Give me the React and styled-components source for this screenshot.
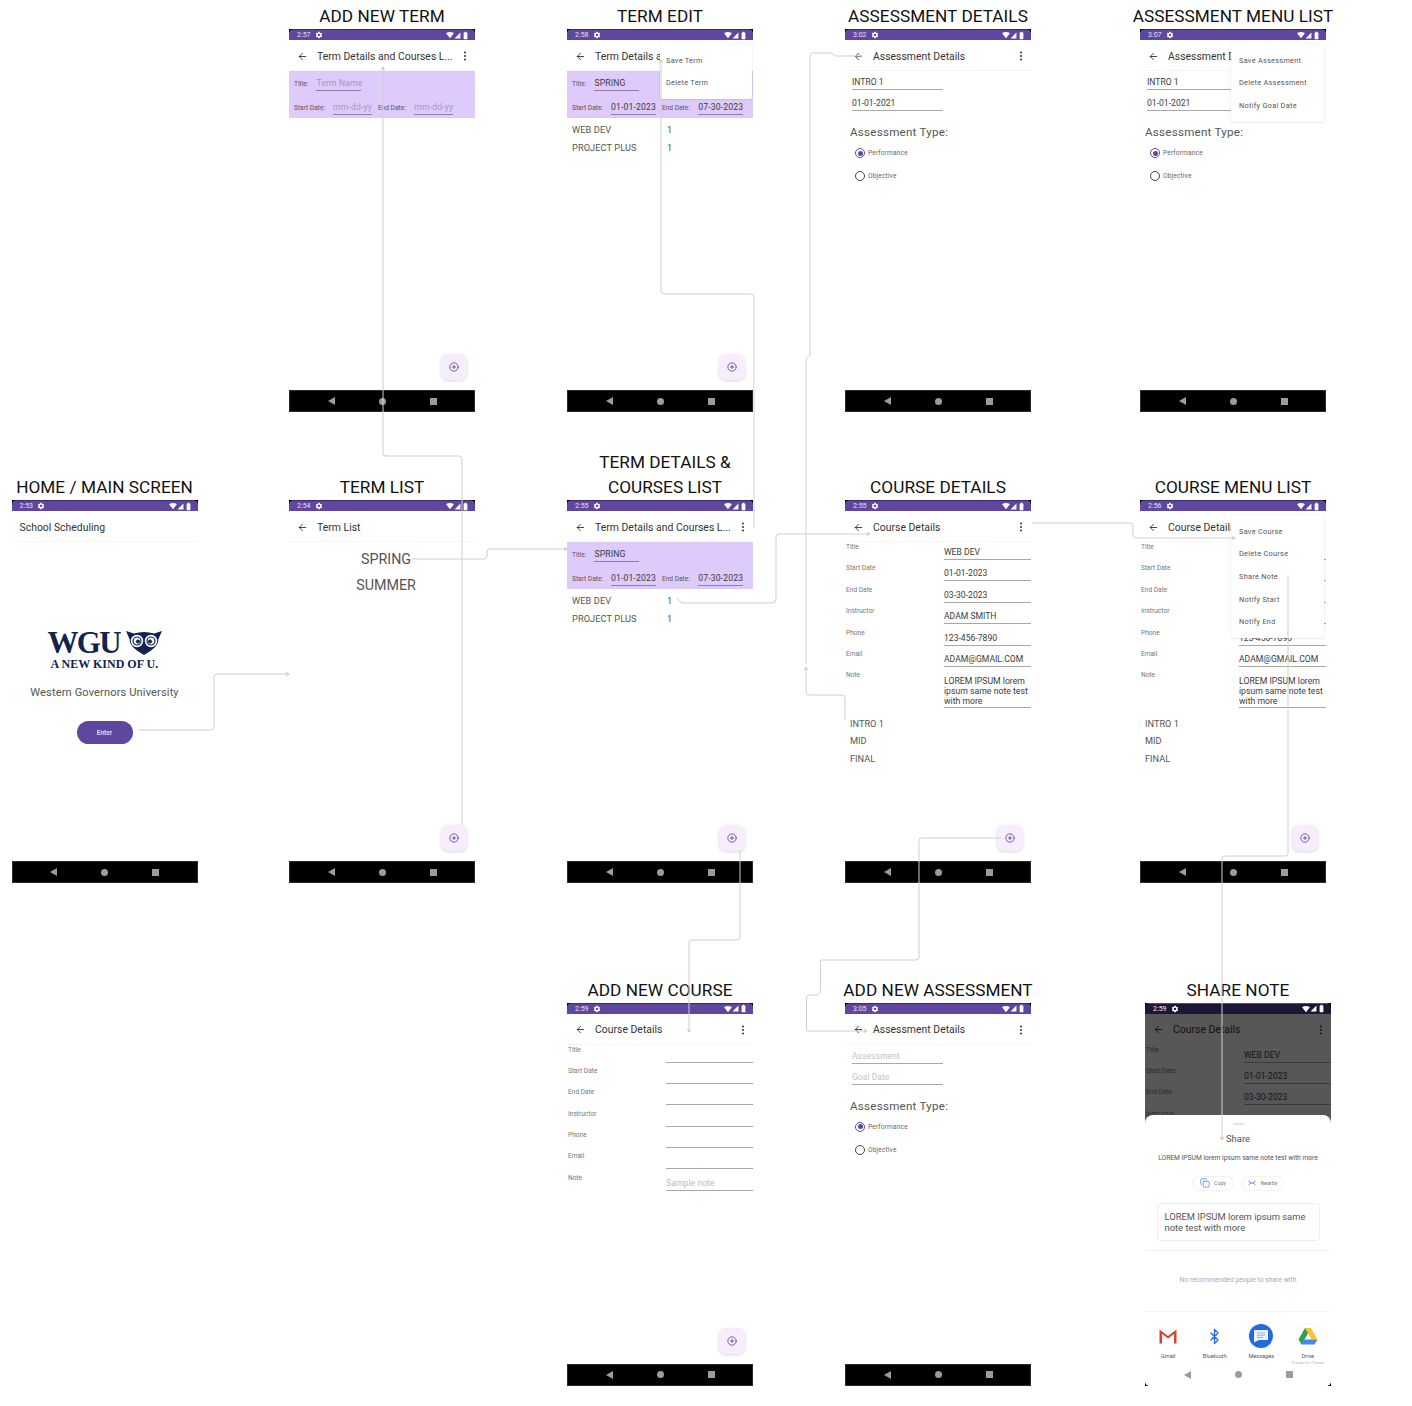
import React from "react";
import styled, { createGlobalStyle } from "styled-components";
import { ArrowLeft, CirclePlus, Copy, Bluetooth } from "lucide-react";
import { MdSettings, MdSignalWifi4Bar, MdSignalCellular4Bar, MdBatteryFull } from "react-icons/md";

const Global = createGlobalStyle`
  html, body { margin: 0; padding: 0; background: #fff; }
  body { font-family: Roboto, "Liberation Sans", sans-serif; }
  * { box-sizing: border-box; }
`;

const Canvas = styled.div`
  position: relative;
  width: 1412px;
  height: 1406px;
  overflow: hidden;
  background: #fff;
`;

const Frame = styled.section`
  position: absolute;
  left: ${(p) => p.$x}px;
  top: ${(p) => p.$y - 25 * (p.$lines || 1)}px;
  width: 186px;
  display: flex;
  flex-direction: column;
`;

const Title = styled.h2`
  margin: 0;
  display: flex;
  justify-content: center;
  font: 400 17.2px/25px Roboto, "Liberation Sans", sans-serif;
  letter-spacing: 0.05px;
  color: #111;
  white-space: nowrap;
  transform: translateX(${(p) => p.$shift || 0}px);
`;

const Phone = styled.div`
  position: relative;
  width: 186px;
  height: 383px;
  background: #fff;
  display: flex;
  flex-direction: column;
  overflow: hidden;
`;

const Status = styled.div`
  position: relative;
  height: 11px;
  flex: none;
  display: flex;
  align-items: center;
  padding: 0 5px 0 8px;
  background: ${(p) => (p.$dim ? "#1d1636" : "#5f47a0")};
  border-top: 1px solid ${(p) => (p.$dim ? "#555" : "#3b2a70")};
  color: ${(p) => (p.$dim ? "#f2f2f2" : "#e6e0f5")};
  font-size: 7px;
  gap: 4px;
  z-index: ${(p) => (p.$dim ? 2 : "auto")};
  &::before, &::after {
    content: "";
    position: absolute;
    top: -1px;
    width: 4px;
    height: 4px;
  }
  &::before { left: 0; background: radial-gradient(circle at 100% 100%, transparent 3.5px, #000 4px); }
  &::after { right: 0; background: radial-gradient(circle at 0 100%, transparent 3.5px, #000 4px); }
`;

const StatusRight = styled.span`
  margin-left: auto;
  display: flex;
  align-items: center;
  gap: 0;
  color: #fff;
`;

const Bar = styled.header`
  height: 31px;
  flex: none;
  display: flex;
  align-items: center;
  padding: 2px 6px 0 8px;
  border-bottom: 1px solid #f6f6f6;
  color: #333;
  font-size: 10.4px;
  letter-spacing: 0.02px;
  white-space: nowrap;
`;

const BarTitle = styled.span`
  margin-left: ${(p) => (p.$home ? 0 : 9)}px;
  flex: 1;
`;

const Dots = styled.svg`
  width: 8px;
  height: 10px;
`;

const Body = styled.main`
  flex: 1;
  min-height: 0;
  display: flex;
  flex-direction: column;
  overflow: hidden;
`;

const ShareBody = styled(Body)`
  flex: none;
  height: 71px;
`;

const Nav = styled.footer`
  height: 22px;
  width: 100%;
  flex: none;
  display: grid;
  grid-template-columns: repeat(3, 51px);
  justify-content: center;
  justify-items: center;
  align-items: center;
  background: ${(p) => (p.$light ? "#fff" : "#000")};
  border: 1px solid ${(p) => (p.$light ? "#fff" : "#2b2b2b")};
  position: relative;
`;

const NavTriangle = styled.i`
  width: 0;
  height: 0;
  border-style: solid;
  border-width: 4px 7px 4px 0;
  border-color: transparent #9c9c9c transparent transparent;
`;

const NavCircle = styled.i`
  width: 7px;
  height: 7px;
  border-radius: 50%;
  background: #9c9c9c;
`;

const NavSquare = styled.i`
  width: 7px;
  height: 7px;
  background: #9c9c9c;
`;

const Corner = styled.i`
  position: absolute;
  bottom: -1px;
  ${(p) => (p.$right ? "right: -1px;" : "left: -1px;")}
  width: 4px;
  height: 4px;
  background: radial-gradient(circle at ${(p) => (p.$right ? "0 0" : "100% 0")}, transparent 3.5px, #000 4px);
`;

const Fab = styled.div`
  position: absolute;
  left: 152px;
  top: 325px;
  width: 26px;
  height: 26px;
  border-radius: 7px;
  background: #f8edfd;
  box-shadow: 0 1px 3px rgba(0, 0, 0, 0.16);
  display: flex;
  align-items: center;
  justify-content: center;
  color: #4f3a96;
`;

const Menu = styled.ul`
  position: absolute;
  list-style: none;
  margin: 0;
  left: ${(p) => p.$left}px;
  top: 15px;
  width: ${(p) => p.$width}px;
  padding: 5.5px 0 4px;
  background: #fff;
  border-radius: 2px;
  box-shadow: 0 0 2px rgba(0, 0, 0, 0.12), 0 1px 2px rgba(0, 0, 0, 0.06);
  z-index: 3;
`;

const MenuItem = styled.li`
  height: 22.7px;
  line-height: 22.7px;
  padding-left: ${(p) => p.$pad}px;
  font-size: 7.3px;
  letter-spacing: 0.3px;
  color: #555;
`;

/* term panel */
const Panel = styled.div`
  height: 47px;
  flex: none;
  padding: 5px 0 0 5px;
  background: #dfcbfb;
  display: flex;
  flex-direction: column;
  gap: 9px;
`;

const PanelRow = styled.div`
  height: 15px;
  display: flex;
  align-items: center;
  white-space: nowrap;
`;

const PanelLabel = styled.span`
  font-size: 6.6px;
  color: #555;
  margin-right: ${(p) => p.$gap}px;
`;

const PanelField = styled.span`
  height: 15px;
  width: ${(p) => (p.$width ? p.$width + "px" : "auto")};
  display: flex;
  align-items: center;
  border-bottom: 1px solid #8d7fa8;
  font-size: 8.6px;
  letter-spacing: 0.15px;
  color: ${(p) => (p.$hint ? "#a595c0" : "#3a3a3a")};
  margin-right: ${(p) => p.$gap || 0}px;
`;

const CourseRows = styled.div`
  margin-top: 2px;
  display: flex;
  flex-direction: column;
`;

const CourseRow = styled.div`
  height: 18px;
  padding-left: 5px;
  display: grid;
  grid-template-columns: 95px 1fr;
  align-items: center;
  font-size: 9.2px;
  letter-spacing: 0.1px;
  color: #555;
`;

/* course form */
const Form = styled.div`
  display: grid;
  grid-template-columns: 99px 87px;
  row-gap: 3.4px;
  grid-auto-rows: 18px;
`;

const FormLabel = styled.span`
  padding-left: 1px;
  font-size: 6.6px;
  line-height: 10px;
  color: #777;
`;

const FormField = styled.span`
  display: flex;
  align-items: flex-end;
  padding-bottom: 2px;
  border-bottom: 1px solid #a8a8a8;
  font-size: 8.6px;
  line-height: 10px;
  color: ${(p) => (p.$hint ? "#bbb" : "#3c3c3c")};
  white-space: nowrap;
`;

const NoteField = styled.span`
  grid-row: span 2;
  padding-top: 5.6px;
  height: ${(p) => (p.$short ? "18px" : "37.6px")};
  border-bottom: 1px solid #a8a8a8;
  font-size: 8.7px;
  line-height: 10px;
  color: ${(p) => (p.$hint ? "#bbb" : "#3c3c3c")};
`;

const Assessments = styled.ul`
  list-style: none;
  margin: 5px 0 0;
  padding: 0 0 0 5px;
  font-size: 9.2px;
  line-height: 17.5px;
  color: #555;
`;

/* assessment */
const AssessForm = styled.div`
  padding: 1px 0 0 7px;
  display: flex;
  flex-direction: column;
  gap: 3.4px;
`;

const AssessField = styled.span`
  width: 91px;
  height: 18px;
  display: flex;
  align-items: flex-end;
  padding-bottom: 2px;
  border-bottom: 1px solid #a8a8a8;
  font-size: 8.6px;
  line-height: 10px;
  color: ${(p) => (p.$hint ? "#c4c4c4" : "#3c3c3c")};
`;

const TypeHeading = styled.div`
  margin: 14px 0 0 5px;
  font-size: 11.6px;
  line-height: 14px;
  letter-spacing: 0.25px;
  color: #555;
`;

const RadioList = styled.div`
  margin: 9px 0 0 10px;
  display: flex;
  flex-direction: column;
  gap: 13px;
`;

const RadioRow = styled.label`
  height: 10px;
  display: flex;
  align-items: center;
  gap: 3px;
  font-size: 6.6px;
  letter-spacing: 0.15px;
  color: #666;
`;

const Radio = styled.i`
  width: 10px;
  height: 10px;
  border-radius: 50%;
  border: 1px solid ${(p) => (p.$on ? "#5f47a0" : "#444")};
  display: flex;
  align-items: center;
  justify-content: center;
  &::after {
    content: "";
    width: 5px;
    height: 5px;
    border-radius: 50%;
    background: ${(p) => (p.$on ? "#5f47a0" : "transparent")};
  }
`;

/* home */
const HomeBody = styled(Body)`
  align-items: center;
  padding-top: 87px;
`;

const LogoBlock = styled.div`
  width: 114px;
  display: flex;
  flex-direction: column;
`;

const LogoTop = styled.div`
  height: 27px;
  display: flex;
  align-items: center;
  justify-content: space-between;
`;

const LogoMark = styled.span`
  font: 700 31px/27px "Liberation Serif", serif;
  letter-spacing: -1.7px;
  color: #13234f;
`;

const LogoTag = styled.span`
  margin: 2px 0 0 3px;
  font: 700 12px/13px "Liberation Serif", serif;
  letter-spacing: 0;
  color: #13234f;
  white-space: nowrap;
`;

const Subtitle = styled.p`
  margin: 15px 0 0;
  font-size: 11.1px;
  line-height: 14px;
  letter-spacing: 0.12px;
  color: #555;
`;

const EnterButton = styled.button`
  margin-top: 21px;
  width: 56px;
  height: 23px;
  border: 0;
  border-radius: 12px;
  background: #5f47a0;
  color: #ddd6ee;
  font: 700 6.5px Roboto, sans-serif;
`;

/* term list */
const TermNames = styled.ul`
  list-style: none;
  margin: 4px 0 0;
  padding: 0 0 0 8px;
  text-align: center;
  font-size: 14.3px;
  line-height: 26px;
  color: #555;
`;

/* share */
const Dim = styled.div`
  position: absolute;
  inset: 0;
  background: rgba(0, 0, 0, 0.66);
  z-index: 1;
`;

const Sheet = styled.div`
  position: absolute;
  left: 0;
  right: 0;
  top: 112.5px;
  bottom: 0;
  background: #fff;
  border-radius: 8px 8px 0 0;
  z-index: 2;
  display: flex;
  flex-direction: column;
  align-items: center;
`;

const Handle = styled.i`
  margin-top: 8px;
  width: 11px;
  height: 1.5px;
  background: #e4e4e4;
  flex: none;
`;

const SheetTitle = styled.div`
  margin-top: 7.5px;
  font-size: 9.4px;
  line-height: 14px;
  color: #555;
`;

const SheetText = styled.div`
  margin-top: 7px;
  font-size: 6.7px;
  line-height: 10px;
  color: #555;
  white-space: nowrap;
`;

const Chips = styled.div`
  margin-top: 12.5px;
  display: flex;
  gap: 8px;
`;

const Chip = styled.span`
  width: 42px;
  height: 15px;
  display: flex;
  align-items: center;
  justify-content: center;
  gap: 4px;
  border: 1px solid #f2f2f2;
  border-radius: 8px;
  font-size: 5.4px;
  color: #777;
`;

const NoteBox = styled.div`
  margin-top: 12.5px;
  width: 163px;
  height: 38px;
  padding: 7px 7px;
  border: 1px solid #eee;
  border-radius: 4px;
  font-size: 9.4px;
  line-height: 11px;
  color: #555;
`;

const Divider = styled.hr`
  width: 100%;
  margin: ${(p) => p.$top}px 0 0;
  border: 0;
  border-top: 1px solid #f3f3f3;
`;

const NoPeople = styled.div`
  margin-top: 24px;
  font-size: 6.8px;
  line-height: 10px;
  color: #aaa;
`;

const Apps = styled.div`
  flex: 1;
  min-height: 0;
  width: 100%;
  padding-top: 12px;
  display: grid;
  grid-template-columns: repeat(4, 46.5px);
  overflow: hidden;
`;

const AppCell = styled.div`
  display: flex;
  flex-direction: column;
  align-items: center;
  font-size: 5.6px;
  line-height: 7px;
  color: #555;
  text-align: center;
  white-space: nowrap;
`;

const AppIcon = styled.span`
  width: 24px;
  height: 24px;
  margin-bottom: 5px;
  border-radius: 50%;
  display: flex;
  align-items: center;
  justify-content: center;
  background: ${(p) => p.$bg || "#fff"};
  box-shadow: 0 0 2px rgba(0, 0, 0, 0.1);
`;

const AppHint = styled.span`
  color: #bbb;
`;

const Links = styled.svg`
  position: absolute;
  inset: 0;
  width: 1412px;
  height: 1406px;
  pointer-events: none;
  z-index: 10;
`;

const StatusBar = ({ time, dim }) => (
  <Status $dim={dim}>
    <span>{time}</span>
    <MdSettings size={8} color="#fff" />
    <StatusRight>
      <MdSignalWifi4Bar size={8} />
      <MdSignalCellular4Bar size={7} />
      <MdBatteryFull size={9} />
    </StatusRight>
  </Status>
);

const AppBar = ({ title, home, plain }) => (
  <Bar>
    {!home && <ArrowLeft size={11} strokeWidth={1.8} color="#222" />}
    <BarTitle $home={home}>{title}</BarTitle>
    {!home && !plain && (
      <Dots viewBox="0 0 8 10" fill="#333">
        <circle cx="4" cy="1.5" r="1" />
        <circle cx="4" cy="5" r="1" />
        <circle cx="4" cy="8.5" r="1" />
      </Dots>
    )}
  </Bar>
);

const NavBar = ({ light }) => (
  <Nav $light={light}>
    <NavTriangle />
    <NavCircle />
    <NavSquare />
    {light && <Corner />}
    {light && <Corner $right />}
  </Nav>
);

const FabBtn = () => (
  <Fab>
    <CirclePlus size={10} strokeWidth={1.9} />
  </Fab>
);

const Screen = ({ x, y, title, lines, shift, time, bar, plain, fab, children, over }) => (
  <Frame $x={x} $y={y} $lines={lines}>
    {(Array.isArray(title) ? title : [title]).map((t) => (
      <Title key={t} $shift={shift}>{t}</Title>
    ))}
    <Phone>
      <StatusBar time={time} />
      <AppBar title={bar} plain={plain} />
      <Body>{children}</Body>
      <NavBar />
      {fab && <FabBtn />}
      {over}
    </Phone>
  </Frame>
);

const TermPanel = ({ title, start, end, hint }) => (
  <Panel>
    <PanelRow>
      <PanelLabel $gap={8}>Title:</PanelLabel>
      <PanelField $width={45} $hint={hint}>{title}</PanelField>
    </PanelRow>
    <PanelRow>
      <PanelLabel $gap={8}>Start Date:</PanelLabel>
      <PanelField $hint={hint} $gap={6}>{start}</PanelField>
      <PanelLabel $gap={8.5}>End Date:</PanelLabel>
      <PanelField $hint={hint}>{end}</PanelField>
    </PanelRow>
  </Panel>
);

const Courses = () => (
  <CourseRows>
    <CourseRow><span>WEB DEV</span><span>1</span></CourseRow>
    <CourseRow><span>PROJECT PLUS</span><span>1</span></CourseRow>
  </CourseRows>
);

const courseLabels = ["Title", "Start Date", "End Date", "Instructor", "Phone", "Email"];
const courseValues = ["WEB DEV", "01-01-2023", "03-30-2023", "ADAM SMITH", "123-456-7890", "ADAM@GMAIL.COM"];
const noteText = "LOREM IPSUM lorem ipsum same note test with more";

const CourseForm = ({ empty, rows = 6, note = true }) => (
  <Form>
    {courseLabels.slice(0, rows).map((l, i) => (
      <React.Fragment key={l}>
        <FormLabel>{l}</FormLabel>
        <FormField>{empty ? "" : courseValues[i]}</FormField>
      </React.Fragment>
    ))}
    {note && <FormLabel>Note</FormLabel>}
    {note && <NoteField $hint={empty} $short={empty}>{empty ? "Sample note" : noteText}</NoteField>}
  </Form>
);

const AssessList = () => (
  <Assessments>
    <li>INTRO 1</li>
    <li>MID</li>
    <li>FINAL</li>
  </Assessments>
);

const AssessBody = ({ name, date, hint }) => (
  <>
    <AssessForm>
      <AssessField $hint={hint}>{name}</AssessField>
      <AssessField $hint={hint}>{date}</AssessField>
    </AssessForm>
    <TypeHeading>Assessment Type:</TypeHeading>
    <RadioList>
      <RadioRow><Radio $on />Performance</RadioRow>
      <RadioRow><Radio />Objective</RadioRow>
    </RadioList>
  </>
);

const OwlLogo = () => (
  <svg width="36" height="25" viewBox="0 0 36 25">
    <path d="M0 1 L8 3.5 Q18 0.5 28 3.5 L36 1 L32.5 9 Q33 17 18 25 Q3 17 3.5 9 Z" fill="#13234f" />
    <circle cx="11" cy="11" r="6.2" fill="#fff" />
    <circle cx="25" cy="11" r="6.2" fill="#fff" />
    <circle cx="11" cy="11" r="4.6" fill="#13234f" />
    <circle cx="25" cy="11" r="4.6" fill="#13234f" />
    <circle cx="11" cy="11" r="3.4" fill="#fff" />
    <circle cx="25" cy="11" r="3.4" fill="#fff" />
    <circle cx="12" cy="11.5" r="2" fill="#13234f" />
    <circle cx="24" cy="11.5" r="2" fill="#13234f" />
  </svg>
);

const GmailIcon = () => (
  <svg width="18" height="15" viewBox="0 0 18 15">
    <path d="M0.5 0.5 L9 7 L17.5 0.5 V14.5 H15 V5 L9 9.6 L3 5 V14.5 H0.5 Z" fill="#d4432f" />
  </svg>
);

const MessagesIcon = () => (
  <svg width="16" height="14" viewBox="0 0 16 14">
    <path d="M1 1 H15 V11 H6 L1 13.5 Z" fill="#fff" opacity="0.92" />
    <path d="M4 4 H12 M4 6.2 H12 M4 8.4 H10" stroke="#8fb2ef" strokeWidth="1" />
  </svg>
);

const DriveIcon = () => (
  <svg width="20" height="18" viewBox="0 0 20 18">
    <path d="M7 1 H13 L6.5 12.5 L3.5 17.5 L0.5 12.5 Z" fill="#2f9e57" />
    <path d="M7 1 H13 L19.5 12.5 H13.5 Z" fill="#f7c531" />
    <path d="M6 12.5 H19.5 L16.5 17.5 H3.3 Z" fill="#4285f4" />
  </svg>
);

const NearbyIcon = () => (
  <svg width="8" height="6" viewBox="0 0 8 6" fill="none" stroke="#4d84e6" strokeWidth="0.9">
    <path d="M0.5 1 L3 3 L0.5 5 M7.5 1 L5 3 L7.5 5 M3 3 H5" />
  </svg>
);

const ShareFrame = () => (
  <Frame $x={1145} $y={1002.5}>
    <Title>SHARE NOTE</Title>
    <Phone>
      <StatusBar time="2:59" dim />
      <AppBar title="Course Details" />
      <ShareBody><CourseForm rows={4} note={false} /></ShareBody>
      <Dim />
      <Sheet>
        <Handle />
        <SheetTitle>Share</SheetTitle>
        <SheetText>{noteText}</SheetText>
        <Chips>
          <Chip><Copy size={10} color="#5b8fe8" />Copy</Chip>
          <Chip><NearbyIcon />Nearby</Chip>
        </Chips>
        <NoteBox>{noteText}</NoteBox>
        <Divider $top={9} />
        <NoPeople>No recommended people to share with</NoPeople>
        <Divider $top={26} />
        <Apps>
          <AppCell><AppIcon><GmailIcon /></AppIcon>Gmail</AppCell>
          <AppCell><AppIcon><Bluetooth size={17} color="#2c6fe0" strokeWidth={2} /></AppIcon>Bluetooth</AppCell>
          <AppCell><AppIcon $bg="#1f6ae0"><MessagesIcon /></AppIcon>Messages</AppCell>
          <AppCell><AppIcon><DriveIcon /></AppIcon>Drive<AppHint>Save to Drive</AppHint></AppCell>
        </Apps>
        <NavBar light />
      </Sheet>
    </Phone>
  </Frame>
);

const linkPaths = [
  { d: "M139 730 H211 Q214 730 214 727 V677 Q214 674 217 674 H289", arrow: true },
  { d: "M462 825 V459 Q462 456 459 456 H386 Q383 456 383 453 V67", arrow: true },
  { d: "M412 559 H484 Q487 559 487 556 V552 Q487 549 490 549 H567", arrow: true },
  { d: "M754 528 V297 Q754 294 751 294 H664 Q661 294 661 291 V60", arrow: true },
  { d: "M677 598 Q680 603 683 603 H772 Q776 603 776 599 V537 Q776 534 779 534 H870", arrow: true },
  { d: "M845 720 V698 Q845 695 842 695 H809 Q806 695 806 692 V667", arrow: true },
  { d: "M806 664 V360 Q806 358 808 357 Q810 356 810 354 V56 Q810 53 813 53 H832 L835 56 H862", arrow: true },
  { d: "M1001 838 H922 Q919 838 919 841 V957 Q919 960 916 960 H821", arrow: false },
  { d: "M820.5 960 V990 Q820.5 994 817 995 H810 Q806.5 995 806.5 998 V1031 H867", arrow: true },
  { d: "M740 850 V937 Q740 940 737 940 H692 Q689 940 689 943 V1032", arrow: true },
  { d: "M1288 575 V853 Q1288 856 1285 856 H1225 Q1222 856 1222 859 V1140", arrow: true },
  { d: "M1032 523 H1130 Q1133 523 1133 526 V535 Q1133 538 1136 538 H1235", arrow: true },
];

const Connectors = () => (
  <Links viewBox="0 0 1412 1406" fill="none">
    <defs>
      <marker id="tip" viewBox="0 0 6 6" refX="5" refY="3" markerWidth="5" markerHeight="5" orient="auto" markerUnits="userSpaceOnUse">
        <path d="M1 1 L5 3 L1 5" stroke="#bdbdbd" strokeWidth="1" fill="none" />
      </marker>
    </defs>
    {linkPaths.map((p) => (
      <path key={p.d} d={p.d} stroke="#cfcfcf" strokeWidth="1" markerEnd={p.arrow ? "url(#tip)" : undefined} />
    ))}
  </Links>
);

export default function App() {
  return (
    <Canvas>
      <Global />

      <Frame $x={11.5} $y={500}>
        <Title>HOME / MAIN SCREEN</Title>
        <Phone>
          <StatusBar time="2:53" />
          <AppBar title="School Scheduling" home />
          <HomeBody>
            <LogoBlock>
              <LogoTop>
                <LogoMark>WGU</LogoMark>
                <OwlLogo />
              </LogoTop>
              <LogoTag>A NEW KIND OF U.</LogoTag>
            </LogoBlock>
            <Subtitle>Western Governors University</Subtitle>
            <EnterButton>Enter</EnterButton>
          </HomeBody>
          <NavBar />
        </Phone>
      </Frame>

      <Screen x={289} y={29} title="ADD NEW TERM" time="2:57" bar="Term Details and Courses L..." fab>
        <TermPanel title="Term Name" start="mm-dd-yy" end="mm-dd-yy" hint />
      </Screen>

      <Screen
        x={567} y={29} title="TERM EDIT" time="2:58" bar="Term Details and Courses L..." fab
        over={<Menu $left={92.5} $width={92.5}><MenuItem $pad={6.5}>Save Term</MenuItem><MenuItem $pad={6.5}>Delete Term</MenuItem></Menu>}
      >
        <TermPanel title="SPRING" start="01-01-2023" end="07-30-2023" />
        <Courses />
      </Screen>

      <Screen x={845} y={29} title="ASSESSMENT DETAILS" time="3:02" bar="Assessment Details">
        <AssessBody name="INTRO 1" date="01-01-2021" />
      </Screen>

      <Screen
        x={1140} y={29} title="ASSESSMENT MENU LIST" time="3:07" bar="Assessment Details"
        over={<Menu $left={91} $width={93}><MenuItem $pad={8}>Save Assessment</MenuItem><MenuItem $pad={8}>Delete Assessment</MenuItem><MenuItem $pad={8}>Notify Goal Date</MenuItem></Menu>}
      >
        <AssessBody name="INTRO 1" date="01-01-2021" />
      </Screen>

      <Screen x={289} y={500} title="TERM LIST" time="2:54" bar="Term List" fab plain>
        <TermNames>
          <li>SPRING</li>
          <li>SUMMER</li>
        </TermNames>
      </Screen>

      <Screen x={567} y={500} lines={2} shift={5} title={["TERM DETAILS &", "COURSES LIST"]} time="2:55" bar="Term Details and Courses L..." fab>
        <TermPanel title="SPRING" start="01-01-2023" end="07-30-2023" />
        <Courses />
      </Screen>

      <Screen x={845} y={500} title="COURSE DETAILS" time="2:55" bar="Course Details" fab>
        <CourseForm />
        <AssessList />
      </Screen>

      <Screen
        x={1140} y={500} title="COURSE MENU LIST" time="2:56" bar="Course Details" fab
        over={<Menu $left={91} $width={93}><MenuItem $pad={8}>Save Course</MenuItem><MenuItem $pad={8}>Delete Course</MenuItem><MenuItem $pad={8}>Share Note</MenuItem><MenuItem $pad={8}>Notify Start</MenuItem><MenuItem $pad={8}>Notify End</MenuItem></Menu>}
      >
        <CourseForm />
        <AssessList />
      </Screen>

      <Screen x={567} y={1002.5} title="ADD NEW COURSE" time="2:59" bar="Course Details" fab>
        <CourseForm empty />
      </Screen>

      <Screen x={845} y={1002.5} title="ADD NEW ASSESSMENT" time="3:05" bar="Assessment Details">
        <AssessBody name="Assessment" date="Goal Date" hint />
      </Screen>

      <ShareFrame />
      <Connectors />
    </Canvas>
  );
}
